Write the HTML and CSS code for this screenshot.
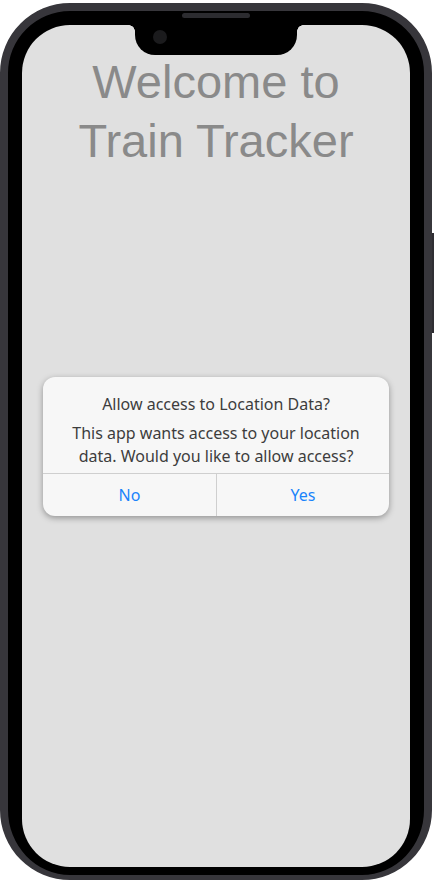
FILE: index.html
```html
<!DOCTYPE html>
<html lang="en">
<head>
<meta charset="utf-8">
<title>Train Tracker</title>
<link rel="stylesheet" href="styles.css">
</head>
<body>
  <div class="phone">
    <div class="side-button"></div>
    <div class="speaker"></div>
    <div class="screen">
      <div class="notch"><span class="camera"></span></div>
      <h1 class="title">Welcome to<br>Train Tracker</h1>
      <div class="overlay">
        <div class="dialog">
          <div class="dialog-body">
            <p class="dialog-title">Allow access to Location Data?</p>
            <p class="dialog-text">This app wants access to your location data. Would you like to allow access?</p>
          </div>
          <div class="dialog-actions">
            <button class="dialog-btn">No</button>
            <button class="dialog-btn">Yes</button>
          </div>
        </div>
      </div>
    </div>
  </div>
</body>
</html>
```
FILE: styles.css
```css
* { box-sizing: border-box; }
html, body {
  margin: 0;
  padding: 0;
  background: #ffffff;
  height: 881px;
  overflow: hidden;
}
.phone {
  position: relative;
  margin-top: 3px;
  width: 432px;
  height: 877px;
  border: 8px solid #37363b;
  border-bottom-width: 5px;
  border-radius: 70px;
  background: #000;
  padding: 14px 14px 8px 14px;
}
.side-button {
  position: absolute;
  right: -10px;
  top: 222px;
  width: 2px;
  height: 100px;
  background: #2f2e33;
}
.speaker {
  position: absolute;
  top: 2px;
  left: 174px;
  width: 68px;
  height: 5px;
  border-radius: 3px;
  background: #2c2c30;
}
.screen {
  position: relative;
  height: 842px;
  background: #e0e0e0;
  border-radius: 48px;
  overflow: hidden;
}
.notch {
  position: absolute;
  top: 0;
  left: 113px;
  width: 162px;
  height: 30px;
  background: #000;
  border-radius: 0 0 20px 20px;
}
.notch::before,
.notch::after {
  content: "";
  position: absolute;
  top: 0;
  width: 6px;
  height: 6px;
}
.notch::before {
  left: -6px;
  background: radial-gradient(circle at 0 100%, transparent 5.5px, #000 6px);
}
.notch::after {
  right: -6px;
  background: radial-gradient(circle at 100% 100%, transparent 5.5px, #000 6px);
}
.camera {
  position: absolute;
  left: 18px;
  top: 5px;
  width: 14px;
  height: 14px;
  border-radius: 50%;
  background: #1b1b1d;
}
.title {
  margin: 0;
  padding-top: 27px;
  text-align: center;
  font-family: "Liberation Sans", Arial, sans-serif;
  font-weight: 400;
  font-size: 47px;
  line-height: 59px;
  color: #8a8a8a;
}
.overlay {
  position: absolute;
  inset: 0;
  display: flex;
  align-items: center;
  justify-content: center;
}
.dialog {
  width: 346px;
  background: #f7f7f7;
  border-radius: 12px;
  box-shadow: 0 2px 6px rgba(0, 0, 0, 0.35);
  font-family: "Noto Sans", "Open Sans", sans-serif;
  overflow: hidden;
}
.dialog-body {
  padding: 16px 14px 5px;
  text-align: center;
  color: #3d3d3d;
}
.dialog-title {
  margin: 0;
  font-size: 16px;
  line-height: 22px;
}
.dialog-text {
  margin: 7px 0 0;
  font-size: 16px;
  line-height: 23px;
}
.dialog-actions {
  display: grid;
  grid-template-columns: 1fr 1fr;
  border-top: 1px solid #cfcfcf;
}
.dialog-btn {
  height: 42px;
  border: 0;
  background: transparent;
  font-family: "Noto Sans", "Open Sans", sans-serif;
  font-size: 16px;
  color: #1a84fb;
  padding: 0;
}
.dialog-btn + .dialog-btn {
  border-left: 1px solid #cfcfcf;
}
```
